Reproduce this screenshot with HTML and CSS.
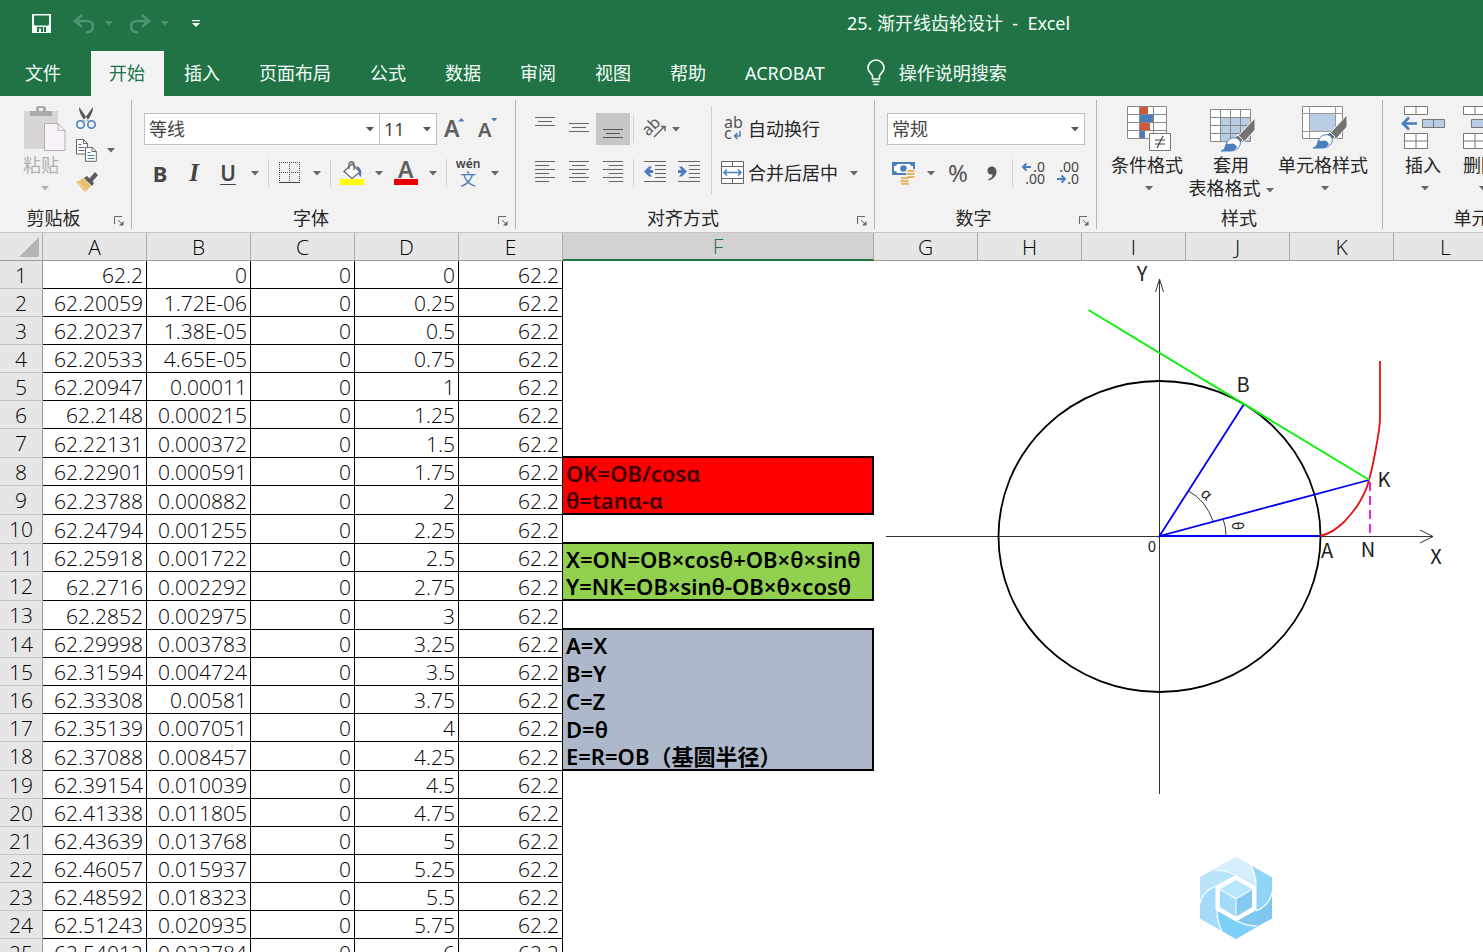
FILE: index.html
```html
<!DOCTYPE html>
<html lang="zh-CN">
<head>
<meta charset="utf-8">
<title>25. 渐开线齿轮设计 - Excel</title>
<link rel="stylesheet" href="styles.css">
</head>
<body>
<svg class="defs" aria-hidden="true">
  <symbol id="down" viewBox="0 0 8 5"><path d="M0 0h8L4 4.500z" fill="currentColor"/></symbol>
  <symbol id="launch" viewBox="0 0 10 10"><path d="M.5 8V.5H8M4 4l4 4" fill="none" stroke="#666"/><path d="M9.500 5v4.500H5z" fill="#666"/></symbol>
  <symbol id="brush" viewBox="0 0 34 34">
    <path d="M34 0v12L23 24l-6-6z" fill="#737373" stroke="#f7f7f7"/>
    <path d="M17 17l5 5-3 3-6-5z" fill="#737373" stroke="#fff"/>
    <path d="M0 33c5-1 4-6 6-9 3-5 10-6 13-1 2 5-4 10-9 10z" fill="#fff" stroke="#4a7ebb"/>
    <path d="M0 33c5-1 4-6 6-8 3 3 6-3 10 4-2 3-4 4-7 4z" fill="#4a7ebb"/>
  </symbol>
</svg>

<header class="window-head">
  <div class="titlebar">
    <div class="quick">
      <button class="q-btn" aria-label="保存"><svg width="19" height="19" viewBox="0 0 19 19"><path d="M0 0h19v19H0z" fill="#f5fff9"/><path d="M2 1.500h15v9l-1 1H3l-1-1zM5 13h9v5H5z" fill="#217346"/><path d="M7 14.500h2V18H7zM11 13h1v5h-1z" fill="#f5fff9"/></svg></button>
      <button class="q-btn q-dim" aria-label="撤消"><svg width="22" height="20" viewBox="0 0 22 20"><path d="M9 1L2 7l7 6M2.500 7H14c4 0 6 2.500 6 5.500S18 18 13 18.500" fill="none" stroke="currentColor" stroke-width="2.600"/></svg></button>
      <button class="q-drop q-dim" aria-label="撤消列表"><svg width="8" height="5"><use href="#down"/></svg></button>
      <button class="q-btn q-dim" aria-label="恢复"><svg width="22" height="20" viewBox="0 0 22 20"><path d="M13 1l7 6-7 6M19.500 7H8c-4 0-6 2.500-6 5.500S4 18 9 18.500" fill="none" stroke="currentColor" stroke-width="2.600"/></svg></button>
      <button class="q-drop q-dim" aria-label="恢复列表"><svg width="8" height="5"><use href="#down"/></svg></button>
      <button class="q-more" aria-label="自定义快速访问工具栏"><svg width="8" height="8" viewBox="0 0 8 8"><path d="M0 0h8v1.200H0zM0 3h8L4 7z" fill="#fff"/></svg></button>
    </div>
    <h1 class="title">25. 渐开线齿轮设计&nbsp; -&nbsp; Excel</h1>
  </div>
  <nav class="tabs">
    <button class="tab tab-file">文件</button>
    <button class="tab tab-active">开始</button>
    <button class="tab">插入</button>
    <button class="tab">页面布局</button>
    <button class="tab">公式</button>
    <button class="tab">数据</button>
    <button class="tab">审阅</button>
    <button class="tab">视图</button>
    <button class="tab">帮助</button>
    <button class="tab">ACROBAT</button>
    <button class="tell-me"><svg width="18" height="26" viewBox="0 0 18 26"><path d="M5.500 19v-3c0-2-4.500-3.500-4.500-8a8 8 0 0 1 16 0c0 4.500-4.500 6-4.500 8v3zM5.500 21.500h7M6.500 24.500h5" fill="none" stroke="#f0fff6" stroke-width="1.600"/></svg>操作说明搜索</button>
  </nav>
</header>

<section class="ribbon" aria-label="功能区">
  <div class="group g-clip">
    <div class="group-body clip">
      <button class="big big-paste" disabled>
        <svg width="42" height="46" viewBox="0 0 42 46"><path d="M0 5h34v38H0z" fill="#d8d5d8"/><path d="M6 5h6V1.500L14 0h6l2 1.500V5h6v5H6z" fill="#aaa"/><path d="M15 2h4v3h-4z" fill="#f2f2f2"/><path d="M20.500 17.500H34l7 7v20H20.500z" fill="#f7f3f8" stroke="#b4b0b4"/><path d="M34 17.500v7h7" fill="none" stroke="#b4b0b4"/></svg>
        <span>粘贴</span>
        <svg class="dn" width="8" height="5"><use href="#down"/></svg>
      </button>
      <div class="clip-side">
        <button class="side" aria-label="剪切"><svg width="20" height="22" viewBox="0 0 20 22"><path d="M3 0c3 4 6 8 9.500 13.500l-3 1C6 10 3 6 3 0zM17 0c-3 4-6 8-9.500 13.500l3 1C14 10 17 6 17 0z" fill="#555"/><circle cx="4.500" cy="17.500" r="3.700" fill="none" stroke="#4a7ebb" stroke-width="1.600"/><circle cx="15.500" cy="17.500" r="3.700" fill="none" stroke="#4a7ebb" stroke-width="1.600"/></svg></button>
        <button class="side" aria-label="复制"><svg width="21" height="23" viewBox="0 0 21 23"><path d="M.5.500h7l4 4V15H.5z" fill="#fff" stroke="#666"/><path d="M7.500.500v4h4M2.500 5.500h3M2.500 8.500h6M2.500 11.500h6" fill="none" stroke="#668"/><path d="M9.500 8.500h6.800l4 4v9.800H9.500z" fill="#fff" stroke="#666"/><path d="M16 8.500v4h4" fill="none" stroke="#666"/><path d="M11.500 13.500h3M11.500 16.500h7M11.500 19.500h7" stroke="#4a7ea0"/></svg><svg class="dn" width="8" height="5"><use href="#down"/></svg></button>
        <button class="side" aria-label="格式刷"><svg width="23" height="20" viewBox="0 0 23 20"><path d="M0 10l8-4 7 8-6 6z" fill="#ecbe72"/><path d="M3 12l5 4M2 10l8 8" stroke="#f4d9a8"/><path d="M8 6l3-2 7 7-2 3z" fill="#5a5a5e"/><path d="M13 7l6-7 3 3-6 7z" fill="#5a5a5e"/></svg></button>
      </div>
    </div>
    <div class="group-foot"><span>剪贴板</span><button aria-label="剪贴板选项"><svg width="10" height="10"><use href="#launch"/></svg></button></div>
  </div>

  <div class="group g-font">
    <div class="group-body rows">
      <div class="row">
        <label class="combo c-font"><select aria-label="字体"><option>等线</option></select><svg width="8" height="5"><use href="#down"/></svg></label>
        <label class="combo c-size"><select aria-label="字号"><option>11</option></select><svg width="8" height="5"><use href="#down"/></svg></label>
        <button class="tool" aria-label="增大字号"><svg width="21" height="24" viewBox="0 0 21 24"><text class="ico-a" x="0" y="20" font-size="23">A</text><path d="M14 4.500h6.500L17.200 1z" fill="#4a7ebb"/></svg></button>
        <button class="tool" aria-label="减小字号"><svg width="21" height="24" viewBox="0 0 21 24"><text class="ico-a" x="0" y="20" font-size="20">A</text><path d="M13 1h6.500l-3.200 3.500z" fill="#4a7ebb"/></svg></button>
      </div>
      <div class="row">
        <button class="tool t-bold">B</button>
        <button class="tool t-italic">I</button>
        <button class="tool t-under">U</button>
        <button class="drop" aria-label="下划线样式"><svg width="8" height="5"><use href="#down"/></svg></button>
        <i class="sep"></i>
        <button class="tool" aria-label="边框"><svg width="22" height="22" viewBox="0 0 22 22"><path d="M0 .5h21M0 10.500h21M.5 0v20M10.500 0v20M20.500 0v20" stroke="#444" stroke-dasharray="1 1"/><path d="M0 20.500h21" stroke="#444"/></svg></button>
        <button class="drop" aria-label="边框样式"><svg width="8" height="5"><use href="#down"/></svg></button>
        <i class="sep"></i>
        <button class="tool" aria-label="填充颜色"><svg width="24" height="24" viewBox="0 0 24 24"><path d="M0 18h24v6H0z" fill="#ff0"/><path d="M16 5c5 1 6 5 5 11-2-1-3-4-2-6z" fill="#4a7ebb"/><path d="M12 3l8 8-8 6.500-8-7z" fill="#fff" stroke="#666" stroke-width="1.300"/><path d="M9 8V2.500Q11.500-1 14 2.500V9" fill="none" stroke="#666" stroke-width="1.300"/></svg></button>
        <button class="drop" aria-label="填充颜色列表"><svg width="8" height="5"><use href="#down"/></svg></button>
        <button class="tool" aria-label="字体颜色"><svg width="24" height="24" viewBox="0 0 24 24"><text class="ico-a" x="4" y="17" font-size="23">A</text><path d="M0 18h24v6H0z" fill="#e80000"/></svg></button>
        <button class="drop" aria-label="字体颜色列表"><svg width="8" height="5"><use href="#down"/></svg></button>
        <i class="sep"></i>
        <button class="tool phonetic" aria-label="拼音"><span>wén</span><b>文</b></button>
        <button class="drop" aria-label="拼音列表"><svg width="8" height="5"><use href="#down"/></svg></button>
      </div>
    </div>
    <div class="group-foot"><span>字体</span><button aria-label="字体选项"><svg width="10" height="10"><use href="#launch"/></svg></button></div>
  </div>

  <div class="group g-align">
    <div class="group-body align">
      <div class="rows">
        <div class="row">
          <button class="tool" aria-label="顶端对齐"><svg width="20" height="24"><path d="M0 .5h20M3 4.500h14M0 8.500h20" stroke="#666"/></svg></button>
          <button class="tool" aria-label="垂直居中"><svg width="20" height="24"><path d="M0 6.500h20M3 10.500h14M0 14.500h20" stroke="#666"/></svg></button>
          <button class="tool tool-on" aria-label="底端对齐"><svg width="20" height="24"><path d="M0 12.500h20M3 16.500h14M0 20.500h20" stroke="#555"/></svg></button>
          <i class="sep"></i>
          <button class="orient" aria-label="方向"><svg width="22" height="22" viewBox="0 0 22 22"><text x="-2" y="13" font-size="16" transform="rotate(-45 7 11)" class="ico-ab">ab</text><path d="M8 19L19 8M15 8.500h4V13" fill="none" stroke="#666" stroke-width="1.500"/></svg><svg width="8" height="5"><use href="#down"/></svg></button>
        </div>
        <div class="row">
          <button class="tool" aria-label="左对齐"><svg width="20" height="24"><path d="M0 .5h20M0 4.500h14M0 8.500h20M0 12.500h14M0 16.500h20M0 20.500h14" stroke="#666"/></svg></button>
          <button class="tool" aria-label="居中"><svg width="20" height="24"><path d="M0 .5h20M3 4.500h14M0 8.500h20M3 12.500h14M0 16.500h20M3 20.500h14" stroke="#666"/></svg></button>
          <button class="tool" aria-label="右对齐"><svg width="20" height="24"><path d="M0 .5h20M6 4.500h14M0 8.500h20M6 12.500h14M0 16.500h20M6 20.500h14" stroke="#666"/></svg></button>
          <i class="sep"></i>
          <button class="tool" aria-label="减少缩进"><svg width="22" height="24"><path d="M0 .5h22M11 4.500h11M11 8.500h11M11 12.500h11M11 16.500h11M0 20.500h22" stroke="#666"/><path d="M0 10.500l5-5h3L5.500 9H9v3H5.500L8 15.500H5z" fill="#4a7ebb"/></svg></button>
          <button class="tool" aria-label="增加缩进"><svg width="22" height="24"><path d="M0 .5h22M11 4.500h11M11 8.500h11M11 12.500h11M11 16.500h11M0 20.500h22" stroke="#666"/><path d="M9 10.500l-5-5H1L3.500 9H0v3h3.500L1 15.500h3z" fill="#4a7ebb"/></svg></button>
        </div>
      </div>
      <i class="tall-sep"></i>
      <div class="rows">
        <button class="wide"><svg width="23" height="24" viewBox="0 0 23 24"><text class="ico-ab" x="3" y="11" font-size="16">ab</text><text class="ico-ab" x="3" y="22" font-size="16">c</text><path d="M19 14v5h-5M16.500 16l-3 3 3 3" fill="none" stroke="#4a7ebb" stroke-width="1.500"/></svg>自动换行</button>
        <button class="wide"><svg width="23" height="24" viewBox="0 0 23 24"><path d="M.5.500h22v22H.5zM.5 5.500h22M.5 17.500h22M11.500.500v5M11.500 17.500v5" fill="#fff" stroke="#666"/><path d="M3 11.500h17M6 8.500l-3 3 3 3M17 8.500l3 3-3 3" fill="none" stroke="#4a7ebb" stroke-width="1.500"/></svg>合并后居中<svg class="far" width="8" height="5"><use href="#down"/></svg></button>
      </div>
    </div>
    <div class="group-foot"><span>对齐方式</span><button aria-label="对齐选项"><svg width="10" height="10"><use href="#launch"/></svg></button></div>
  </div>

  <div class="group g-num">
    <div class="group-body rows">
      <div class="row">
        <label class="combo c-num"><select aria-label="数字格式"><option>常规</option></select><svg width="8" height="5"><use href="#down"/></svg></label>
      </div>
      <div class="row">
        <button class="tool" aria-label="会计数字格式"><svg width="24" height="24" viewBox="0 0 24 24"><path d="M0 1h23v13H0z" fill="#4a7ebb"/><path d="M2 5q3 0 3-2h13q0 2 3 2v5q-3 0-3 2H5q0-2-3-2z" fill="#fff"/><circle cx="11.500" cy="7.500" r="3.300" fill="#4a7ebb"/><path d="M14 8h9v11h-6v4H8v-8h6z" fill="#f2f2f2"/><path d="M15.500 10h7M14.500 13h8M15.500 16h7M9 17h8M8.500 20h8M9 22.800h8" stroke="#e5b56a" stroke-width="2"/></svg></button>
        <button class="drop" aria-label="会计格式列表"><svg width="8" height="5"><use href="#down"/></svg></button>
        <button class="tool t-pct">%</button>
        <button class="tool" aria-label="千位分隔样式"><svg width="10" height="15" viewBox="0 0 10 15"><path d="M1 13.500c3-1 4.500-3 4.500-5C2 9 .5 7 .5 4.500 .5 2 2.500.5 5 .5s4.500 2 4.500 5c0 4-3 8-8 9z" fill="#555"/></svg></button>
        <i class="sep"></i>
        <button class="tool" aria-label="增加小数位数"><svg width="24" height="24" viewBox="0 0 24 24"><text class="ico-n" x="23" y="11">.0</text><text class="ico-n" x="23" y="23">.00</text><path d="M1 6h8M4.500 2.500L1 6l3.500 3.500" fill="none" stroke="#4a7ebb" stroke-width="2"/></svg></button>
        <button class="tool" aria-label="减少小数位数"><svg width="24" height="24" viewBox="0 0 24 24"><text class="ico-n" x="23" y="11">.00</text><text class="ico-n" x="23" y="23">.0</text><path d="M1 18h8M5.500 14.500L9 18l-3.500 3.500" fill="none" stroke="#4a7ebb" stroke-width="2"/></svg></button>
      </div>
    </div>
    <div class="group-foot"><span>数字</span><button aria-label="数字选项"><svg width="10" height="10"><use href="#launch"/></svg></button></div>
  </div>

  <div class="group g-style">
    <div class="group-body bigs">
      <button class="big b-cond">
        <svg width="44" height="46" viewBox="0 0 44 46"><path d="M.5.500h39v32H.5zM.5 8.500h39M.5 16.500h39M.5 24.500h39M12.500.500v32M26.500.500v32" fill="#fff" stroke="#888"/><path d="M13 1h8v7h-8zM13 17h10v7H13z" fill="#d0593c"/><path d="M13 9h13v7H13zM13 25h5v7h-5z" fill="#4a7ebb"/><path d="M22.500 27.500h21v17h-21z" fill="#fff" stroke="#777"/><path d="M28 34h10M28 38h10M36 30l-6 12" stroke="#444" stroke-width="1.200"/></svg>
        <span>条件格式</span><svg class="dn" width="8" height="5"><use href="#down"/></svg>
      </button>
      <button class="big b-table">
        <svg width="46" height="46" viewBox="0 0 46 46"><path d="M.5 3.500h40v32H.5z" fill="#fff"/><path d="M10 12h30v23H10z" fill="#b8cce4"/><path d="M.5 3.500h40v32H.5zM.5 11.500h40M.5 19.500h40M.5 27.500h40M10.500 3.500v32M20.500 3.500v32M30.500 3.500v32" fill="none" stroke="#888"/><svg x="11" y="12" width="34" height="34"><use href="#brush"/></svg></svg>
        <span>套用<br>表格格式<svg class="inline-dn" width="8" height="5"><use href="#down"/></svg></span>
      </button>
      <button class="big b-cell">
        <svg width="46" height="46" viewBox="0 0 46 46"><path d="M.5.500h40v32H.5z" fill="#fff" stroke="#888"/><path d="M8 8h26v18H8z" fill="#b8cce4"/><path d="M7.500.500v32M33.500.500v32M.5 7.500h40M.5 25.500h40" fill="none" stroke="#999"/><svg x="11" y="9" width="34" height="34"><use href="#brush"/></svg></svg>
        <span>单元格样式</span><svg class="dn" width="8" height="5"><use href="#down"/></svg>
      </button>
    </div>
    <div class="group-foot foot-plain"><span>样式</span></div>
  </div>

  <div class="group g-cells">
    <div class="group-body bigs">
      <button class="big b-ins">
        <svg width="44" height="46" viewBox="0 0 44 46"><path d="M3.500.500h23v8h-23zM15 .5v8M3.500 27.500h23v15h-23zM15 27.500v15M3.500 35h23" fill="#fff" stroke="#777"/><path d="M21.500 13.500h22v8h-22z" fill="#b8cce4" stroke="#777"/><path d="M32.500 13.500v8" stroke="#777"/><path d="M1 17.500h15M8 11.500l-6 6 6 6" fill="none" stroke="#4a7ebb" stroke-width="2.600"/></svg>
        <span>插入</span><svg class="dn" width="8" height="5"><use href="#down"/></svg>
      </button>
      <button class="big b-ins">
        <svg width="44" height="46" viewBox="0 0 44 46"><path d="M4.500.500h23v8h-23zM16 .5v8M4.500 27.500h23v15h-23zM16 27.500v15M4.500 35h23" fill="#fff" stroke="#777"/><path d="M12.500 13.500h22v8h-22z" fill="#b8cce4" stroke="#777"/></svg>
        <span>删除</span><svg class="dn" width="8" height="5"><use href="#down"/></svg>
      </button>
    </div>
    <div class="group-foot foot-plain"><span>单元格</span></div>
  </div>
</section>

<main class="sheet">
  <table class="grid">
    <colgroup><col class="col-head"><col class="col"><col class="col"><col class="col"><col class="col"><col class="col"><col class="col-f"><col class="col"><col class="col"><col class="col"><col class="col"><col class="col"><col class="col"></colgroup>
    <thead>
      <tr><th class="corner"><svg width="20" height="20" viewBox="0 0 20 20"><path d="M20 0v20H0z" fill="#b4b4b4"/></svg></th><th>A</th><th>B</th><th>C</th><th>D</th><th>E</th><th class="selected">F</th><th>G</th><th>H</th><th>I</th><th>J</th><th>K</th><th>L</th></tr>
    </thead>
    <tbody id="rows"></tbody>
  </table>

  <svg class="drawing" width="609" height="600" viewBox="874 261 609 600" role="img" aria-label="渐开线示意图">
    <g fill="none">
      <path d="M886 536.500h547M1159.500 794V279M1420 530l13 6.500-13 6.500M1155.500 292l4-13 4 13" stroke="#333"/>
      <ellipse cx="1159.500" cy="536.500" rx="161" ry="155.500" stroke="#000" stroke-width="1.800"/>
      <path d="M1320 536c10-2 18-8 25-15 6-7 10-11 14-18 5-8 8-14 10-23 3-10 5-21 7-32 2-12 4-20 4-30v-57" stroke="#e81010" stroke-width="1.800"/>
      <path d="M1370 482v54" stroke="#e010e0" stroke-width="1.800" stroke-dasharray="9 5"/>
      <path d="M1244 404L1159.500 536 1369 480M1159.500 536H1320" stroke="#0000f0" stroke-width="1.800"/>
      <path d="M1088.500 310L1369.500 480" stroke="#10f010" stroke-width="2"/>
      <path d="M1188.500 491q17 9 24.500 30M1223 519q3 7 3 17" stroke="#333"/>
    </g>
    <g class="marks">
      <text x="1142" y="281">Y</text><text x="1243" y="392">B</text><text x="1384" y="487">K</text>
      <text x="1327" y="558">A</text><text x="1368" y="557">N</text><text x="1436" y="564">X</text>
      <text x="1152" y="552" class="mark-sm">0</text>
      <text x="1206" y="499" class="mark-sm" transform="rotate(40 1206 495)">α</text>
      <text x="1237" y="531" class="mark-sm" transform="rotate(85 1237 526)">θ</text>
    </g>
  </svg>

  <svg class="badge" width="74" height="82" viewBox="0 0 74 82" aria-hidden="true">
    <path d="M37 0L73 20.500v41L37 82 1 61.500v-41z" fill="#a4daf8"/>
    <path d="M37 0l15 8.500c3 6 5 13 5 19L37 17C31 14 24 13 15 12.500z" fill="#d5eefc"/>
    <path d="M52 8.500l21 12V35c-1 9-8 15-16 19V27c0-6-2-13-5-18.500z" fill="#90d5f8"/>
    <path d="M73 35v26.500L58 69c-8 0-16-2-22-5l21-11c8-3 14-10 16-18z" fill="#7fc7ef"/>
    <path d="M58 69.500L37 82 23 74c-4-8-5-15-5-21l18 10c7 4 14 6 22 6.500z" fill="#7bd0f8"/>
    <path d="M23 74L1 61.500V46c2-8 9-14 16-17v24c0 7 2 14 6 21z" fill="#a5dbf8"/>
    <path d="M1 46V20.500L15 12.500c8 0 16 2 22 4L17 29C9 32 3 38 1 46z" fill="#b9e4fa"/>
    <path d="M15 13c9 0 16 2 22 5M52 8.500q5 9 5 20M73 35q-2 13-16 19M58 69q-12 0-22-6M23 74q-5-9-5-21M1 46q3-12 16-17" fill="none" stroke="#fff" stroke-width="1.200"/>
    <path d="M37 17.500L57.500 29v24L37 64.500 16.500 53V29z" fill="#fff"/>
    <path d="M37 23l16 9-16 9-16-9z" fill="#b9e6fb"/><path d="M21 33l15.500 9v17.500L21 50z" fill="#a2dbf8"/><path d="M53 33l-15.500 9v17.500L53 50z" fill="#84caf0"/>
  </svg>
</main>
<script src="script.js"></script>
</body>
</html>
```
FILE: styles.css
```css
* { box-sizing: border-box; }

body {
  margin: 0;
  height: 100vh;
  display: flex;
  flex-direction: column;
  overflow: hidden;
  background: #fff;
  color: #262626;
  font-family: "Noto Sans", "Noto Sans CJK SC", sans-serif;
  font-size: 18px;
  line-height: 24px;
}

button {
  margin: 0;
  padding: 0;
  border: 0;
  background: none;
  color: inherit;
  font: inherit;
  white-space: nowrap;
}

svg { display: block; flex: none; overflow: visible; }
.defs { position: absolute; width: 0; height: 0; }

/* Title bar and tabs */
.window-head { flex: none; background: #217346; color: #f3fff8; }
.titlebar { display: flex; align-items: center; height: 51px; padding-bottom: 4px; }
.quick { flex: 0 0 434px; display: flex; align-items: center; padding-left: 24px; }
.q-btn { width: 34px; height: 32px; display: grid; place-items: center; }
.q-btn + .q-btn { margin-left: 9px; }
.q-dim { color: #4f9470; }
.q-drop { width: 16px; height: 32px; display: grid; place-items: center; }
.q-drop + .q-btn { margin-left: 6px; }
.q-more { width: 20px; height: 32px; margin-left: 13px; display: grid; place-items: center; }
.title { flex: 1; margin: 0; padding-bottom: 1px; text-align: center; font-size: 18px; font-weight: 400; }

.tabs { display: flex; gap: 2px; height: 45px; }
.tab { padding: 0 19px 2px 18px; }
.tab-file { flex: 0 0 89px; padding: 0 28px 2px 25px; }
.tab-active { background: #f3f3f3; color: #217346; }
.tell-me { display: flex; align-items: center; gap: 14px; margin-left: 21px; padding-bottom: 2px; }

/* Ribbon */
.ribbon {
  flex: none;
  display: flex;
  height: 137px;
  padding: 4px 0 3px;
  border-bottom: 1px solid #c6c6c6;
  background: #f2f2f2;
  overflow: hidden;
}
.group {
  flex: none;
  display: flex;
  flex-direction: column;
  justify-content: space-between;
  border-right: 1px solid #b4b4b4;
}
.g-clip { width: 132px; }
.g-font { width: 384px; padding-left: 11px; }
.g-align { width: 359px; padding-left: 12px; }
.g-num { width: 222px; padding-left: 12px; }
.g-style { width: 286px; padding-left: 11px; }
.g-cells { width: 197px; padding-left: 11px; }

.group-foot { display: flex; align-items: center; height: 22px; }
.group-foot span { flex: 1; text-align: center; line-height: 22px; }
.group-foot button { width: 24px; height: 22px; padding: 5px 0 0 7px; }
.g-font .group-foot, .g-align .group-foot, .g-num .group-foot,
.g-style .group-foot, .g-cells .group-foot { margin-left: -12px; }

.rows { display: flex; flex-direction: column; gap: 12px; }
.group-body.rows, .align .rows { padding-top: 13px; }
.row { display: flex; align-items: center; height: 32px; }
.tool { flex: none; width: 34px; height: 32px; display: grid; place-items: center; color: #444; }
.tool-on { background: #c6c6c6; }
.drop { flex: none; width: 20px; height: 32px; display: grid; place-items: center; color: #666; }
.sep { flex: none; width: 8px; height: 28px; border-right: 1px solid #d0d0d0; margin-right: 4px; margin-left: -4px; }

.combo { display: grid; align-items: center; height: 32px; border: 1px solid #c0c0c0; background: #fff; color: #555; }
.combo select, .combo svg { grid-area: 1 / 1; }
.combo select {
  width: 100%;
  height: 30px;
  padding: 0 20px 0 4px;
  border: 0;
  appearance: none;
  background: none;
  color: #444;
  font: inherit;
}
.combo svg { justify-self: end; margin-right: 5px; pointer-events: none; }
.c-font { width: 236px; margin-left: 1px; }
.c-size { width: 58px; margin-left: -1px; }
.c-num { width: 198px; }

.ico-a { font-family: "Noto Sans", sans-serif; font-weight: 600; fill: #5f5f5f; }
.ico-ab { font-family: "Noto Sans", sans-serif; fill: #555; }
.ico-n { font-family: "Noto Sans", sans-serif; font-size: 14px; fill: #444; text-anchor: end; }
.t-bold { font-size: 22px; font-weight: 700; }
.t-italic { font-family: "Liberation Serif", serif; font-size: 25px; font-style: italic; font-weight: 700; }
.t-under { font-size: 21px; font-weight: 600; text-decoration: underline; text-underline-offset: 3px; text-decoration-thickness: 1px; }
.t-pct { font-size: 24px; color: #555; }
.phonetic { grid-template-rows: 12px 18px; align-content: center; }
.phonetic span { font-size: 12px; line-height: 12px; font-weight: 600; }
.phonetic b { font-size: 16px; line-height: 18px; font-weight: 400; color: #4a7ebb; }
.orient { width: 50px; height: 32px; display: flex; align-items: center; justify-content: center; gap: 4px; color: #666; }

.align { display: flex; }
.tall-sep { width: 1px; height: 88px; margin: 6px 9px 0 5px; background: #d0d0d0; }
.align > .rows:first-child { width: 178px; }
.wide { display: flex; align-items: center; gap: 4px; height: 32px; }
.wide .far { margin-left: 8px; color: #666; }

.clip { display: flex; }
.big { display: flex; flex-direction: column; align-items: center; padding-top: 6px; line-height: 23px; }
.big > svg:first-child { margin-bottom: 2px; }
.big .dn { margin-top: 9px; color: #666; }
.big-paste { width: 74px; padding-left: 16px; color: #b0b0b0; }
.big-paste .dn { color: #b0b0b0; }
.big-paste span { padding-right: 8px; }
.clip-side { display: flex; flex-direction: column; padding: 2px 0 0 2px; }
.side { display: flex; align-items: center; gap: 10px; height: 32px; color: #666; }
.bigs { display: flex; align-items: flex-start; }
.b-cond { width: 78px; }
.b-table { width: 90px; }
.b-cell { width: 94px; }
.b-ins { width: 58px; }
.g-style .big > svg, .g-cells .b-ins > .dn { margin-left: 4px; }
.inline-dn { display: inline-block; vertical-align: middle; margin-left: 5px; color: #666; }

/* Worksheet */
.sheet { position: relative; flex: 1; min-height: 0; overflow: hidden; }
.grid { width: 1498px; table-layout: fixed; border-collapse: separate; border-spacing: 0; font-family: "Open Sans", "Noto Sans", sans-serif; font-weight: 300; font-size: 21px; line-height: 24px; color: #000; }
.col-head { width: 43px; }
.col { width: 104px; }
.col-f { width: 311px; }
.grid th { padding: 0; height: 28px; font-weight: 300; background: #e6e6e6; border-right: 1px solid #ababab; border-bottom: 1px solid #9b9b9b; }
.grid thead th.selected { background: #d2d2d2; color: #217346; border-bottom: 2px solid #217346; }
.grid thead th.corner { padding: 0 3px 0 19px; }
.grid tbody th { border-bottom-color: #c4c4c4; border-right-color: #9b9b9b; }
.grid td { height: 28px; padding: 1px 0 0; }
.grid tr.taller td { height: 29px; }
.grid td.num { padding-right: 3px; text-align: right; border-right: 1px solid #000; border-bottom: 1px solid #000; }
.grid td.note { padding-left: 3px; border-right: 2px solid #000; font-family: "Noto Sans", "Noto Sans CJK SC", sans-serif; font-size: 22px; font-weight: 600; white-space: nowrap; }
.grid td.edge { border-bottom: 2px solid #000; }
.red { background: #f00; color: #3a0000; }
.green { background: #92d050; }
.blue { background: #adb9ca; }

.drawing { position: absolute; left: 874px; top: 28px; }
.marks { font-family: "Noto Sans CJK SC", sans-serif; font-size: 20px; fill: #222; text-anchor: middle; }
.mark-sm { font-size: 15px; }
.badge { position: absolute; left: 1199px; top: 624px; }
```
FILE: script.js
```js
const colA = ["62.2", "62.20059", "62.20237", "62.20533", "62.20947", "62.2148", "62.22131", "62.22901", "62.23788", "62.24794", "62.25918", "62.2716", "62.2852", "62.29998", "62.31594", "62.33308", "62.35139", "62.37088", "62.39154", "62.41338", "62.43639", "62.46057", "62.48592", "62.51243", "62.54012"];
const colB = ["0", "1.72E-06", "1.38E-05", "4.65E-05", "0.00011", "0.000215", "0.000372", "0.000591", "0.000882", "0.001255", "0.001722", "0.002292", "0.002975", "0.003783", "0.004724", "0.00581", "0.007051", "0.008457", "0.010039", "0.011805", "0.013768", "0.015937", "0.018323", "0.020935", "0.023784"];
const notes = {
  8: ["OK=OB/cosα", "red"],
  9: ["θ=tanα-α", "red"],
  11: ["X=ON=OB×cosθ+OB×θ×sinθ", "green"],
  12: ["Y=NK=OB×sinθ-OB×θ×cosθ", "green"],
  14: ["A=X", "blue"],
  15: ["B=Y", "blue"],
  16: ["C=Z", "blue"],
  17: ["D=θ", "blue"],
  18: ["E=R=OB（基圆半径）", "blue"]
};
// Rows that carry a thick lower border are one pixel taller.
const thick = [7, 9, 10, 12, 13, 18];

document.getElementById("rows").innerHTML = colA.map((a, i) => {
  const n = i + 1;
  const cells = [a, colB[i], "0", String(i * 0.25), "62.2"]
    .map(v => `<td class="num">${v}</td>`).join("");
  const note = notes[n];
  const cls = [note ? `note ${note[1]}` : "", thick.includes(n) ? "edge" : ""].join(" ");
  return `<tr class="${thick.includes(n) ? "taller" : ""}"><th>${n}</th>${cells}<td class="${cls}">${note ? note[0] : ""}</td><td colspan="6"></td></tr>`;
}).join("");
```
